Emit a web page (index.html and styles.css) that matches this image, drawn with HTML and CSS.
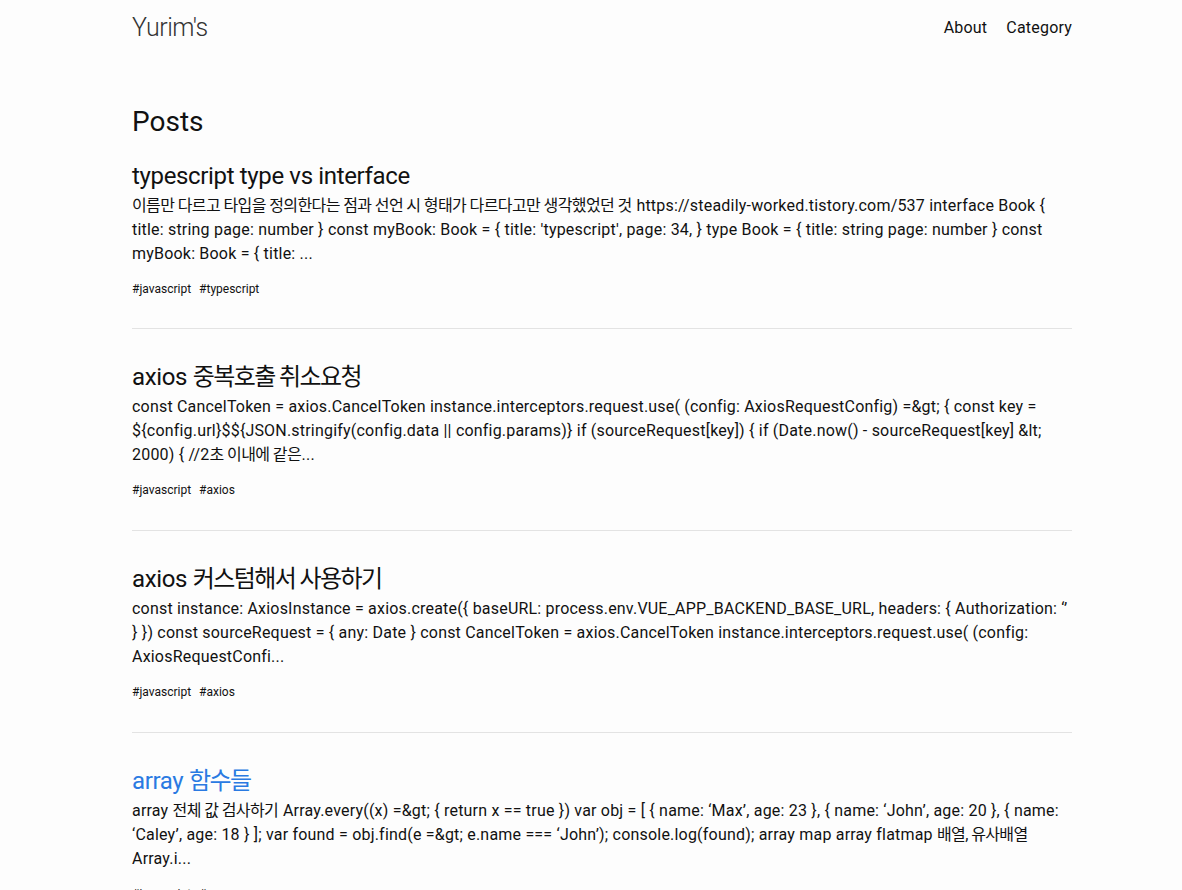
FILE: index.html
```html
<!DOCTYPE html>
<html lang="ko">
<head>
<meta charset="utf-8">
<title>Yurim's</title>
<link rel="stylesheet" href="styles.css">
</head>
<body>
<header class="site-header">
  <div class="wrapper header-inner">
    <a class="site-title" href="#">Yurim's</a>
    <nav class="site-nav">
      <a class="nav-link" href="#">About</a>
      <a class="nav-link" href="#">Category</a>
    </nav>
  </div>
</header>
<main class="wrapper">
  <h1 class="page-heading">Posts</h1>
  <ul class="post-list">
    <li class="post">
      <h2 class="post-title"><a href="#">typescript type vs interface</a></h2>
      <p class="post-excerpt"><span class="ko">이름만 다르고 타입을 정의한다는 점과 선언 시 형태가 다르다고만 생각했었던 것</span> https://steadily-worked.tistory.com/537 interface Book { title: string page: number } const myBook: Book = { title: 'typescript', page: 34, } type Book = { title: string page: number } const myBook: Book = { title: ...</p>
      <div class="tags"><span class="tag">#javascript</span><span class="tag">#typescript</span></div>
    </li>
    <li class="post">
      <h2 class="post-title"><a href="#">axios <span class="ko">중복호출 취소요청</span></a></h2>
      <p class="post-excerpt">const CancelToken = axios.CancelToken instance.interceptors.request.use( (config: AxiosRequestConfig) =&amp;gt; { const key = ${config.url}$${JSON.stringify(config.data || config.params)} if (sourceRequest[key]) { if (Date.now() - sourceRequest[key] &amp;lt; 2000) { //2<span class="ko">초 이내에 같은</span>...</p>
      <div class="tags"><span class="tag">#javascript</span><span class="tag">#axios</span></div>
    </li>
    <li class="post">
      <h2 class="post-title"><a href="#">axios <span class="ko">커스텀해서 사용하기</span></a></h2>
      <p class="post-excerpt">const instance: AxiosInstance = axios.create({ baseURL: process.env.VUE_APP_BACKEND_BASE_URL, headers: { Authorization: ‘’ } }) const sourceRequest = { any: Date } const CancelToken = axios.CancelToken instance.interceptors.request.use( (config: AxiosRequestConfi...</p>
      <div class="tags"><span class="tag">#javascript</span><span class="tag">#axios</span></div>
    </li>
    <li class="post">
      <h2 class="post-title"><a class="hover" href="#">array <span class="ko">함수들</span></a></h2>
      <p class="post-excerpt">array <span class="ko">전체 값 검사하기</span> Array.every((x) =&amp;gt; { return x == true }) var obj = [ { name: ‘Max’, age: 23 }, { name: ‘John’, age: 20 }, { name: ‘Caley’, age: 18 } ]; var found = obj.find(e =&amp;gt; e.name === ‘John’); console.log(found); array map array flatmap <span class="ko">배열, 유사배열</span> Array.i...</p>
      <div class="tags"><span class="tag">#javascript</span><span class="tag">#array</span></div>
    </li>
  </ul>
</main>
</body>
</html>
```

FILE: styles.css
```css
* { box-sizing: border-box; }
html, body { margin: 0; padding: 0; }
body {
  font-family: Roboto, "Noto Sans CJK KR", sans-serif;
  color: #111;
  background: #fdfdfd;
  font-size: 16px;
  line-height: 1.5;
}
a { color: inherit; text-decoration: none; }
.wrapper {
  width: 940px;
  margin-left: calc(50% - 459px);
}
.header-inner {
  display: flex;
  justify-content: space-between;
  align-items: center;
  height: 56px;
}
.site-title {
  font-size: 25px;
  font-weight: 300;
  letter-spacing: -0.5px;
  color: #333;
  line-height: 56px;
}
.site-nav { display: flex; gap: 19px; }
.nav-link { font-size: 16px; color: #111; letter-spacing: 0.2px; }
.page-heading {
  font-size: 28px;
  font-weight: 400;
  margin: 48px 0 0;
  line-height: 36px;
}
.post-list { list-style: none; margin: 0; padding: 0; }
.post {
  padding-top: 33px;
  padding-bottom: 33px;
  border-bottom: 1px solid #e3e3e3;
}
.post:first-child { padding-top: 21px; padding-bottom: 32px; }
.post-title {
  font-size: 24px;
  font-weight: 400;
  line-height: 30px;
  letter-spacing: -0.35px;
  margin: 0 0 3px;
}
.post-title .ko { letter-spacing: -1.6px; }
.post-title .hover { color: #2a7ae2; }
.post-excerpt {
  margin: 0;
  font-size: 16px;
  line-height: 24px;
  letter-spacing: 0.2px;
  color: #111;
}
.post-excerpt .ko { letter-spacing: -0.6px; margin-right: 0.6px; }
.tags { margin-top: 16px; display: flex; gap: 8px; font-size: 12px; line-height: 14px; }
.tag { color: #111; }
```
